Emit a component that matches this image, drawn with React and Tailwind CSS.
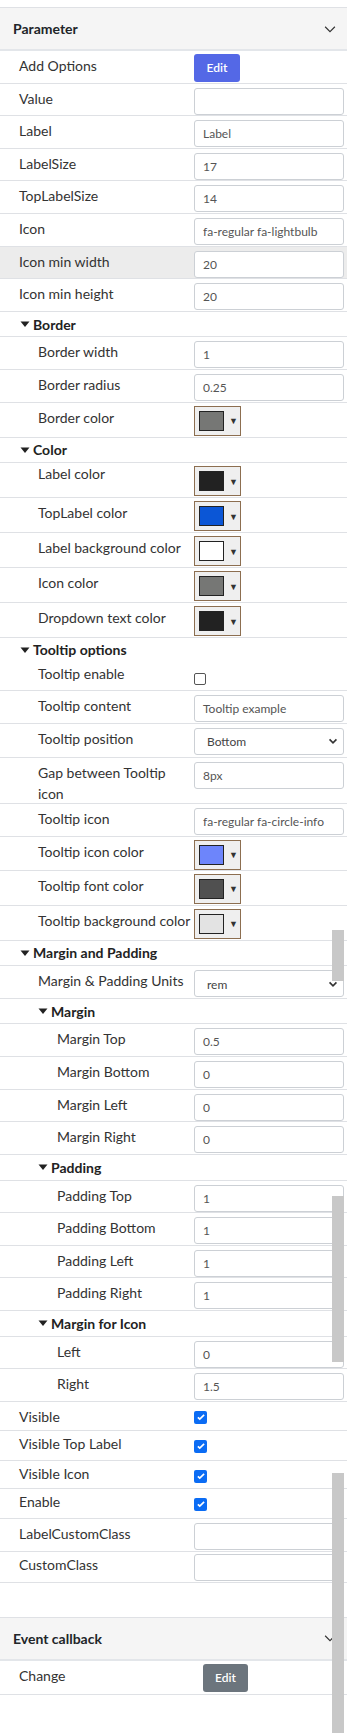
import React from "react";

const font = "font-['Lato','Noto_Sans',sans-serif]";

function Header({ title }) {
    return (
        <div className="flex items-center justify-between h-[43px] pl-[13px] pr-[11px] bg-[#f5f5f5] border-b-2 border-[#e3e6ea]">
            <span className="font-bold text-[14px] text-[#212529]">{title}</span>
            <svg width="12" height="12" viewBox="0 0 16 16">
                <path d="M1.5 5l6.5 6.5 6.5-6.5" fill="none" stroke="#333" strokeWidth="1.5" />
            </svg>
        </div>
    );
}

function Row({ label, indent = "pl-[19px]", h = "h-[32.6px]", labelPt = "pt-[4px]", highlight, noBorder, children }) {
    return (
        <div className={`flex ${h} ${noBorder ? "" : "border-b border-[#dfe1e5]"} ${highlight ? "bg-[#ececec]" : ""}`}>
            <div className={`w-[194px] shrink-0 ${indent} ${labelPt} leading-[21px] text-[#333]`}>{label}</div>
            <div className="flex-1 pr-[3px]">{children}</div>
        </div>
    );
}

function TextInput({ value }) {
    return (
        <div className="mt-[4px] h-[27px] rounded-[3px] border border-[#ccd0d5] bg-white pl-[8px] text-[12px] leading-[25px] text-[#555] whitespace-nowrap overflow-hidden">
            {value}
        </div>
    );
}

function Select({ value }) {
    return (
        <div className="mt-[4px] h-[27px] rounded-[3px] border border-[#ccd0d5] bg-white pl-[12px] pr-[5px] flex items-center justify-between text-[12px] text-[#444]">
            <span className="mt-[2px]">{value}</span>
            <svg width="10" height="10" viewBox="0 0 16 16">
                <path d="M2.5 5.5l5.5 5.5 5.5-5.5" fill="none" stroke="#333" strokeWidth="2.6" />
            </svg>
        </div>
    );
}

function ColorPick({ color }) {
    return (
        <div className="mt-[3px] w-[47px] h-[30px] border border-[#8c6e50] bg-[#efefef] flex items-center pl-[4px]">
            <div className="w-[25px] h-[20px] border border-[#222]" style={{ background: color }} />
            <span className="ml-[5px] text-[9px] text-[#333]">▼</span>
        </div>
    );
}

function Check({ on }) {
    return on ? (
        <div className="mt-[9px] w-[13px] h-[13px] rounded-[2px] bg-[#0b6cf4] flex items-center justify-center">
            <svg width="10" height="10" viewBox="0 0 16 16">
                <path d="M3 8.5l3 3 7-7" fill="none" stroke="white" strokeWidth="2.6" />
            </svg>
        </div>
    ) : (
        <div className="mt-[12px] w-[12px] h-[12px] rounded-[2px] border border-[#555] bg-white" />
    );
}

function Heading({ title, indent = "pl-[20px]", noBorder, h = "h-[25.7px]" }) {
    return (
        <div className={`flex items-center ${h} ${indent} ${noBorder ? "" : "border-b border-[#dfe1e5]"} font-bold text-[#222]`}>
            <svg width="10" height="8" viewBox="0 0 10 8" className="mr-[3px]">
                <path d="M0.5 1.5h9L5 7z" fill="#222" />
            </svg>
            {title}
        </div>
    );
}

function EditBtn({ gray }) {
    return (
        <div className={`mt-[3px] ${gray ? "ml-[9px] bg-[#6c757d] w-[45px]" : "bg-[#5468e6] w-[46px]"} h-[28px] rounded-[3px] text-white text-[12px] font-semibold flex items-center justify-center`}>
            Edit
        </div>
    );
}

export default function App() {
    const sub = "pl-[38px]";
    const sub2 = "pl-[57px]";
    return (
        <div className={`relative w-[347px] h-[1733px] bg-white text-[14px] ${font}`}>
            <div className="h-[8px] border-b border-[#dfe1e5]" />
            <Header title="Parameter" />
            <Row label="Add Options"><EditBtn /></Row>
            <Row label="Value"><TextInput value="" /></Row>
            <Row label="Label"><TextInput value="Label" /></Row>
            <Row label="LabelSize"><TextInput value="17" /></Row>
            <Row label="TopLabelSize"><TextInput value="14" /></Row>
            <Row label="Icon"><TextInput value="fa-regular fa-lightbulb" /></Row>
            <Row label="Icon min width" highlight><TextInput value="20" /></Row>
            <Row label="Icon min height"><TextInput value="20" /></Row>

            <Heading title="Border" />
            <Row label="Border width" indent={sub}><TextInput value="1" /></Row>
            <Row label="Border radius" indent={sub}><TextInput value="0.25" /></Row>
            <Row label="Border color" indent={sub} h="h-[35px]"><ColorPick color="#767775" /></Row>

            <Heading title="Color" />
            <Row label="Label color" indent={sub} h="h-[35px]" labelPt="pt-[0px]"><ColorPick color="#222222" /></Row>
            <Row label="TopLabel color" indent={sub} h="h-[35px]"><ColorPick color="#0b56d6" /></Row>
            <Row label="Label background color" indent={sub} h="h-[35px]"><ColorPick color="#ffffff" /></Row>
            <Row label="Icon color" indent={sub} h="h-[35px]"><ColorPick color="#767775" /></Row>
            <Row label="Dropdown text color" indent={sub} h="h-[35px]"><ColorPick color="#222222" /></Row>

            <Heading title="Tooltip options" noBorder h="h-[23px]" />
            <Row label="Tooltip enable" indent={sub} h="h-[30px]" labelPt="pt-[2px]"><Check /></Row>
            <Row label="Tooltip content" indent={sub}><TextInput value="Tooltip example" /></Row>
            <Row label="Tooltip position" indent={sub} h="h-[34px]"><Select value="Bottom" /></Row>
            <Row label={<>Gap between Tooltip<br />icon</>} indent={sub} h="h-[46px]"><TextInput value="8px" /></Row>
            <Row label="Tooltip icon" indent={sub}><TextInput value="fa-regular fa-circle-info" /></Row>
            <Row label="Tooltip icon color" indent={sub} h="h-[34.5px]"><ColorPick color="#6d85fb" /></Row>
            <Row label="Tooltip font color" indent={sub} h="h-[34.5px]"><ColorPick color="#505050" /></Row>
            <Row label="Tooltip background color" indent={sub} h="h-[35px]"><ColorPick color="#e3e3e3" /></Row>

            <Heading title="Margin and Padding" />
            <Row label="Margin & Padding Units" indent={sub}><Select value="rem" /></Row>
            <Heading title="Margin" indent="pl-[38px]" />
            <Row label="Margin Top" indent={sub2}><TextInput value="0.5" /></Row>
            <Row label="Margin Bottom" indent={sub2}><TextInput value="0" /></Row>
            <Row label="Margin Left" indent={sub2}><TextInput value="0" /></Row>
            <Row label="Margin Right" indent={sub2}><TextInput value="0" /></Row>
            <Heading title="Padding" indent="pl-[38px]" />
            <Row label="Padding Top" indent={sub2}><TextInput value="1" /></Row>
            <Row label="Padding Bottom" indent={sub2}><TextInput value="1" /></Row>
            <Row label="Padding Left" indent={sub2}><TextInput value="1" /></Row>
            <Row label="Padding Right" indent={sub2}><TextInput value="1" /></Row>
            <Heading title="Margin for Icon" indent="pl-[38px]" />
            <Row label="Left" indent={sub2}><TextInput value="0" /></Row>
            <Row label="Right" indent={sub2}><TextInput value="1.5" /></Row>

            <Row label="Visible" h="h-[29px]" labelPt="pt-[4px]"><Check on /></Row>
            <Row label="Visible Top Label" h="h-[30px]" labelPt="pt-[2px]"><Check on /></Row>
            <Row label="Visible Icon" h="h-[28px]" labelPt="pt-[2px]"><Check on /></Row>
            <Row label="Enable" h="h-[30px]" labelPt="pt-[2px]"><Check on /></Row>
            <Row label="LabelCustomClass" h="h-[33px]"><TextInput value="" /></Row>
            <Row label="CustomClass" h="h-[31px]" labelPt="pt-[2px]"><div className="-mt-[2px]"><TextInput value="" /></div></Row>

            <div className="h-[35px] border-b border-[#dfe1e5]" />
            <Header title="Event callback" />
            <Row label="Change" h="h-[34px]"><EditBtn gray /></Row>

            {/* leftover scroll thumbs drawn over the panel */}
            <div className="absolute left-[332px] top-[930px] w-[12px] h-[51px] bg-[#c8c8c8]" />
            <div className="absolute left-[332px] top-[1196px] w-[12px] h-[166px] bg-[#c8c8c8]" />
            <div className="absolute left-[332px] top-[1473px] w-[12px] h-[260px] bg-[#c8c8c8]" />
        </div>
    );
}
